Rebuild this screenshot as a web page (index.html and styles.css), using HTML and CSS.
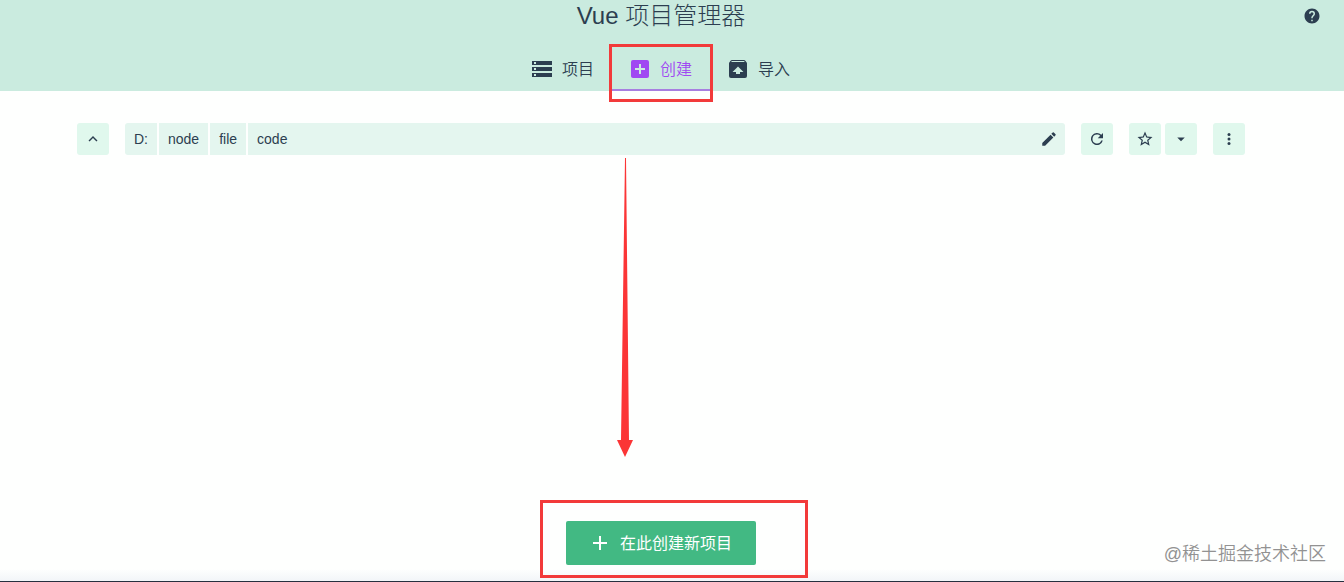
FILE: index.html
```html
<!DOCTYPE html>
<html lang="zh-CN">
<head>
<meta charset="utf-8">
<title>Vue 项目管理器</title>
<link rel="stylesheet" href="styles.css">
</head>
<body>
<div class="app">
  <header class="header">
    <h1 class="title">Vue 项目管理器</h1>
    <button class="help" aria-label="帮助">
      <svg class="icon" viewBox="0 0 24 24"><path d="M12 2C6.500 2 2 6.500 2 12s4.500 10 10 10 10-4.500 10-10S17.500 2 12 2zm1 17h-2v-2h2v2zm2.100-7.700l-.9.900C13.400 12.900 13 13.500 13 15h-2v-.5c0-1.100.4-2.100 1.200-2.800l1.200-1.300c.4-.4.6-.9.6-1.400a2 2 0 0 0-4 0H8a4 4 0 0 1 8 0c0 .9-.4 1.700-.9 2.300z"/></svg>
    </button>
    <nav class="tabs">
      <a class="tab" href="#projects">
        <svg class="icon-tab" viewBox="0 0 24 24"><path d="M2 20h20v-4H2v4zm2-3h2v2H4v-2zM2 4v4h20V4H2zm4 3H4V5h2v2zm-4 7h20v-4H2v4zm2-3h2v2H4v-2z"/></svg>
        <span class="label">项目</span>
      </a>
      <a class="tab tab-active" href="#create">
        <svg class="icon-tab" viewBox="0 0 24 24"><path d="M19 3H5a2 2 0 0 0-2 2v14c0 1.100.9 2 2 2h14a2 2 0 0 0 2-2V5a2 2 0 0 0-2-2zm-2 10h-4v4h-2v-4H7v-2h4V7h2v4h4v2z"/></svg>
        <span class="label">创建</span>
        <i class="mark mark-tab"></i>
      </a>
      <a class="tab" href="#import">
        <svg class="icon-tab" viewBox="0 0 24 24"><path d="M20.500 5.200l-1.400-1.700C18.900 3.200 18.500 3 18 3H6c-.5 0-.9.200-1.200.600L3.500 5.200C3.200 5.600 3 6 3 6.500V19a2 2 0 0 0 2 2h14a2 2 0 0 0 2-2V6.500c0-.5-.2-.9-.5-1.300zM12 9.500l5.500 5.500H14v2h-4v-2H6.500L12 9.500zM5.100 5l.8-1h12l1 1H5.100z"/></svg>
        <span class="label">导入</span>
      </a>
    </nav>
  </header>

  <main class="content">
    <div class="toolbar">
      <button class="tool" aria-label="上级目录"><svg class="icon" viewBox="0 0 24 24"><path d="M7.400 15.400L12 10.800l4.600 4.600L18 14l-6-6-6 6z"/></svg></button>
      <div class="path">
        <button class="folder">D:</button>
        <button class="folder">node</button>
        <button class="folder">file</button>
        <button class="folder folder-last">code</button>
        <button class="edit" aria-label="编辑路径"><svg class="icon" viewBox="0 0 24 24"><path d="M3 17.200V21h3.800L17.800 9.900l-3.700-3.700L3 17.200zM20.700 7a1 1 0 0 0 0-1.400l-2.300-2.300a1 1 0 0 0-1.400 0l-1.900 1.800 3.800 3.800L20.700 7z"/></svg></button>
      </div>
      <button class="tool" aria-label="刷新"><svg class="icon" viewBox="0 0 24 24"><path d="M17.650 6.350A8 8 0 1 0 19.730 14h-2.080A6 6 0 1 1 12 6c1.660 0 3.140.690 4.220 1.780L13 11h7V4l-2.350 2.350z"/></svg></button>
      <div class="group">
        <button class="tool" aria-label="收藏"><svg class="icon" viewBox="0 0 24 24"><path d="M22 9.240l-7.190-.620L12 2 9.190 8.630 2 9.240l5.460 4.730L5.820 21 12 17.270 18.180 21l-1.630-7.030L22 9.240zM12 15.400l-3.760 2.270 1-4.280-3.320-2.880 4.380-.380L12 6.100l1.710 4.040 4.380.380-3.320 2.880 1 4.280L12 15.400z"/></svg></button>
        <button class="tool" aria-label="收藏夹"><svg class="icon" viewBox="0 0 24 24"><path d="M7 10l5 5 5-5z"/></svg></button>
      </div>
      <button class="tool" aria-label="更多"><svg class="icon" viewBox="0 0 24 24"><circle cx="12" cy="6" r="2"/><circle cx="12" cy="12" r="2"/><circle cx="12" cy="18" r="2"/></svg></button>
    </div>
    <svg class="arrow" viewBox="0 0 16 299"><path d="M8 0h1l3 282h4L8 299 0 282h4z"/></svg>
  </main>

  <footer class="actions">
    <div class="action">
      <button class="create">
        <svg class="icon-tab" viewBox="0 0 24 24"><path d="M19 13h-6v6h-2v-6H5v-2h6V5h2v6h6z"/></svg>
        <span class="label">在此创建新项目</span>
      </button>
      <i class="mark mark-create"></i>
    </div>
    <p class="watermark">@稀土掘金技术社区</p>
  </footer>
</div>
</body>
</html>
```
FILE: styles.css
```css
* {
  box-sizing: border-box;
}

body {
  margin: 0;
  background: #fefffe;
  color: #2c3e50;
  font-family: "Liberation Sans", "Noto Sans CJK SC", sans-serif;
  font-size: 16px;
}

button {
  margin: 0;
  border: 0;
  padding: 0;
  background: none;
  color: inherit;
  font: inherit;
  cursor: pointer;
}

svg {
  display: block;
  flex: none;
  fill: currentColor;
}

.app {
  display: flex;
  flex-direction: column;
  min-height: 100vh;
  border-bottom: 1px solid #26303f;
}

.header {
  position: relative;
  display: flex;
  flex-direction: column;
  align-items: center;
  padding-right: 22px;
  background: #caebdf;
}

.title {
  margin: 0;
  height: 47px;
  font-size: 24px;
  font-weight: 300;
  line-height: 32px;
}

.help {
  position: absolute;
  top: 7px;
  right: 23px;
}

.tabs {
  display: flex;
}

.tab {
  position: relative;
  display: flex;
  align-items: center;
  gap: 8px;
  height: 44px;
  padding: 0 18px 0 16px;
  color: inherit;
  font-weight: 350;
  text-decoration: none;
}

.tab-active {
  color: #a049f2;
  box-shadow: inset 0 -2px #a77fe0;
}

.icon-tab {
  width: 24px;
  height: 24px;
}

.label {
  padding-bottom: 2px;
}

.mark {
  position: absolute;
  z-index: 1;
  border: 3px solid #f23a3a;
  pointer-events: none;
}

.mark-tab {
  inset: -3px -3px -11px;
}

.content {
  position: relative;
  flex: 1;
  padding: 32px 99px 0 77px;
}

.toolbar {
  display: flex;
  gap: 16px;
}

.group {
  display: flex;
  gap: 4px;
}

.tool,
.edit {
  display: flex;
  align-items: center;
  justify-content: center;
  width: 32px;
  height: 32px;
}

.tool {
  border-radius: 3px;
  background: #e0f8ed;
}

.icon {
  width: 18px;
  height: 18px;
}

.path {
  display: flex;
  flex: 1;
  border-radius: 3px;
  background: #e4f6ef;
  overflow: hidden;
}

.folder {
  height: 32px;
  padding: 0 9px;
  border-right: 2px solid #fefffe;
  font-size: 14px;
}

.folder-last {
  flex: 1;
  border-right: 0;
  text-align: left;
}

.arrow {
  position: absolute;
  top: 67px;
  left: calc(50% - 55px);
  width: 16px;
  height: 299px;
  fill: #fb3536;
}

.actions {
  position: relative;
  display: flex;
  justify-content: center;
  padding: 0 22px 16px 0;
  background: linear-gradient(to top, #f2f5f8, #fefffe 12px);
}

.action {
  position: relative;
}

.create {
  display: flex;
  align-items: center;
  gap: 8px;
  height: 44px;
  padding: 0 24px 0 22px;
  border-radius: 2px;
  background: #42b983;
  color: #fff;
}

.mark-create {
  inset: -21px -52px -13px -26px;
}

.watermark {
  position: absolute;
  right: 18px;
  bottom: 15px;
  margin: 0;
  color: #929292;
  font-size: 18px;
  font-weight: 350;
  line-height: 24px;
}
```
